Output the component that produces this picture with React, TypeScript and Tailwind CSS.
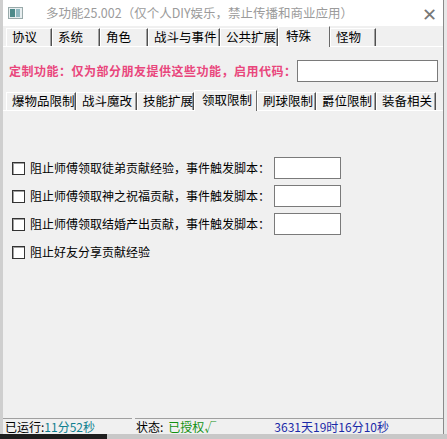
import React from 'react';

const font = { fontFamily: '"Noto Sans CJK SC", "Liberation Sans", sans-serif' };

const topTabs = [
    { label: '协议', w: 'w-[46px]' },
    { label: '系统', w: 'w-[48px]' },
    { label: '角色', w: 'w-[48px]' },
    { label: '战斗与事件', w: 'w-[72px]' },
    { label: '公共扩展', w: 'w-[58px]' },
    { label: '特殊', w: 'w-[52px]', active: true },
    { label: '怪物', w: 'w-[46px]' },
];

const subTabs = [
    { label: '爆物品限制', w: 'w-[70px]' },
    { label: '战斗魔改', w: 'w-[61px]' },
    { label: '技能扩展', w: 'w-[57px]' },
    { label: '领取限制', w: 'w-[63px]', active: true },
    { label: '刷球限制', w: 'w-[59px]' },
    { label: '爵位限制', w: 'w-[60px]' },
    { label: '装备相关', w: 'w-[60px]' },
];

const rows = [
    { label: '阻止师傅领取徒弟贡献经验，事件触发脚本：', input: true },
    { label: '阻止师傅领取神之祝福贡献，事件触发脚本：', input: true },
    { label: '阻止师傅领取结婚产出贡献，事件触发脚本：', input: true },
    { label: '阻止好友分享贡献经验', input: false },
];

type Tab = { label: string; w: string; active?: boolean };

const TabStrip = ({ tabs }: { tabs: Tab[] }) => (
    <div className="flex h-[20px] items-end border-b border-white pl-[3px]">
        {tabs.map((t) =>
            t.active ? (
                <div
                    key={t.label}
                    className={`${t.w} -mb-px flex h-[21px] shrink-0 items-start whitespace-nowrap border-l border-t border-white border-r border-r-[#696969] bg-[#f0f0f0] pl-[7px] pt-[1px] text-[12.5px] leading-[16px] text-black`}
                >
                    {t.label}
                </div>
            ) : (
                <div
                    key={t.label}
                    className={`${t.w} flex h-[18px] shrink-0 items-center whitespace-nowrap border-l border-t border-white border-r border-r-[#505050] pl-[5px] text-[12.5px] leading-none text-black shadow-[inset_-1px_0_0_#a0a0a0]`}
                >
                    {t.label}
                </div>
            )
        )}
    </div>
);

const CheckBox = () => (
    <div className="h-[13px] w-[13px] shrink-0 border border-[#333] bg-white shadow-[inset_1px_1px_0_#a0a0a0]" />
);

export default function App() {
    return (
        <div className="flex h-[439px] w-[447px] flex-col bg-[#2a2a2a]" style={font}>
            <div className="flex h-[434px]">
                <div className="w-[3px] bg-[#cfcfcf]" />
                <div className="flex w-[441px] flex-col border-r border-[#8a8a8a] bg-[#f0f0f0]">
                    {/* title bar */}
                    <div className="flex h-[26px] items-center bg-white">
                        <div className="ml-[5px] flex h-[12px] w-[15px] items-center gap-[1px] border border-[#9aa] bg-[#e8eef0] px-[1px]">
                            <div className="h-[8px] w-[5px] bg-[#4d8a8a]" />
                            <div className="h-[8px] w-[4px] bg-[#8fb8c0]" />
                        </div>
                        <div className="ml-[23px] whitespace-nowrap text-[12.5px] text-[#9b9b9b]">
                            多功能25.002（仅个人DIY娱乐，禁止传播和商业应用）
                        </div>
                        <div className="ml-auto mr-[6px] text-[18px] font-light leading-none text-[#777]">✕</div>
                    </div>

                    <div className="pt-[1px]">
                        <TabStrip tabs={topTabs} />
                    </div>

                    <div className="flex items-center pl-[6px] pt-[13px]">
                        <span className="whitespace-nowrap text-[12px] font-bold tracking-[0.5px] text-[#e9467c]">
                            定制功能：仅为部分朋友提供这些功能，启用代码：
                        </span>
                        <div className="ml-auto mr-[5px] h-[22px] w-[144px] border border-[#7a7a7a] bg-white" />
                    </div>

                    <div className="pt-[9px]">
                        <TabStrip tabs={subTabs} />
                    </div>

                    <div className="flex flex-1 flex-col gap-[6px] pl-[9px] pt-[46px]">
                        {rows.map((r) => (
                            <div key={r.label} className="flex h-[22px] items-center">
                                <CheckBox />
                                <span className="ml-[5px] w-[244px] shrink-0 whitespace-nowrap text-[12px] text-black">{r.label}</span>
                                {r.input && <div className="h-[22px] w-[67px] border border-[#7a7a7a] bg-white" />}
                            </div>
                        ))}
                    </div>

                    {/* status bar */}
                    <div className="flex h-[16px] gap-[3px] text-[12px] leading-[15px]">
                        <div className="flex w-[129px] items-center whitespace-nowrap border-t border-[#a0a0a0] bg-[#f0f0f0] pl-[2px]">
                            <span className="text-black">已运行:</span>
                            <span className="text-[#0f7f8f]">11分52秒</span>
                        </div>
                        <div className="flex flex-1 items-center whitespace-nowrap border-t border-[#a0a0a0] bg-[#f0f0f0] pl-[1px]">
                            <span className="text-black">状态:</span>
                            <span className="ml-[5px] text-[#109010]">已授权√</span>
                            <span className="ml-[58px] text-[#1a2aa8]">3631天19时16分10秒</span>
                        </div>
                    </div>
                </div>
                <div className="flex-1 bg-[#e8e8e8]" />
            </div>
            <div className="flex h-[5px]">
                <div className="w-[107px] bg-[#1e1e1e]" />
                <div className="flex-1 bg-[#c8c8c8]" />
            </div>
        </div>
    );
}
